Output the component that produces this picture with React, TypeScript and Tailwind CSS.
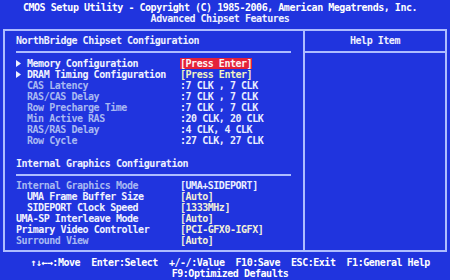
import React from 'react';

type Row = {
  label: string;
  value: string;
  arrow?: boolean;
  indent?: boolean;
  dim?: boolean;
  tone?: 'red' | 'yellow' | 'white' | 'cream';
};

const NB_ROWS: Row[] = [
  { label: 'Memory Configuration', value: '[Press Enter]', arrow: true, tone: 'red' },
  { label: 'DRAM Timing Configuration', value: '[Press Enter]', arrow: true, tone: 'yellow' },
  { label: 'CAS Latency', value: ':7 CLK , 7 CLK', indent: true, dim: true },
  { label: 'RAS/CAS Delay', value: ':7 CLK , 7 CLK', indent: true, dim: true },
  { label: 'Row Precharge Time', value: ':7 CLK , 7 CLK', indent: true, dim: true },
  { label: 'Min Active RAS', value: ':20 CLK, 20 CLK', indent: true, dim: true },
  { label: 'RAS/RAS Delay', value: ':4 CLK, 4 CLK', indent: true, dim: true },
  { label: 'Row Cycle', value: ':27 CLK, 27 CLK', indent: true, dim: true },
];

const GFX_ROWS: Row[] = [
  { label: 'Internal Graphics Mode', value: '[UMA+SIDEPORT]', dim: true, tone: 'white' },
  { label: 'UMA Frame Buffer Size', value: '[Auto]', indent: true, tone: 'cream' },
  { label: 'SIDEPORT Clock Speed', value: '[1333MHz]', indent: true, tone: 'cream' },
  { label: 'UMA-SP Interleave Mode', value: '[Auto]', tone: 'cream' },
  { label: 'Primary Video Controller', value: '[PCI-GFX0-IGFX]', tone: 'cream' },
  { label: 'Surround View', value: '[Auto]', dim: true, tone: 'cream' },
];

function Arrow() {
  return (
    <svg width="5" height="7" viewBox="0 0 5 7" className="mr-[6px]">
      <path d="M0 0 L5 3.5 L0 7 Z" fill="#f0f2ff" />
    </svg>
  );
}

function SetupRow({ row }: { row: Row }) {
  const valueClass =
    row.tone === 'red'
      ? 'bg-[#e4223a] text-[#fff4f4]'
      : row.tone === 'yellow'
        ? 'text-[#f2f2c2]'
        : row.tone === 'cream'
          ? 'text-[#f2f0d8]'
          : 'text-[#eaeeff]';
  return (
    <div className="flex h-[11px] items-center">
      <div className="flex w-[164px] items-center">
        {row.arrow ? <Arrow /> : row.indent ? <span className="w-[11px]" /> : null}
        <span className={row.dim ? 'text-[#a8b8f2]' : 'text-[#f0f2ff]'}>{row.label}</span>
      </div>
      <span className={valueClass}>{row.value}</span>
    </div>
  );
}

export default function App() {
  return (
    <div
      className="flex h-[280px] w-[450px] flex-col overflow-hidden bg-[#2034de] font-bold text-[10px] leading-[11px] tracking-[-0.47px] text-[#f4f4ff]"
      style={{ fontFamily: '"DejaVu Sans Mono", "Liberation Mono", monospace' }}
    >
      {/* Header */}
      <div className="flex flex-col items-center pt-[2px] pr-[10px] whitespace-pre">
        <div className="text-white">CMOS Setup Utility - Copyright (C) 1985-2006, American Megatrends, Inc.</div>
        <div className="text-[#eef0ff]">Advanced Chipset Features</div>
      </div>

      {/* Main box */}
      <div className="mx-[3px] mt-[5px] flex h-[223px] border-2 border-[#aebcff]">
        <div className="flex w-[300px] flex-col border-r-2 border-[#aebcff] pl-[11px] pt-[4px]">
          <div className="text-[#eef0ff]">NorthBridge Chipset Configuration</div>
          <div className="mt-[5px] mb-[5px] h-[2px] w-[275px] bg-[#aebcff]" />
          {NB_ROWS.map(r => (
            <SetupRow key={r.label} row={r} />
          ))}
          <div className="mt-[12px] text-[#eef0ff]">Internal Graphics Configuration</div>
          <div className="mt-[5px] mb-[4px] h-[2px] w-[275px] bg-[#aebcff]" />
          {GFX_ROWS.map(r => (
            <SetupRow key={r.label} row={r} />
          ))}
        </div>
        <div className="flex flex-1 flex-col pt-[4px]">
          <div className="text-center text-[#eef0ff]">Help Item</div>
          <div className="mt-[5px] h-[2px] bg-[#aebcff]" />
        </div>
      </div>

      {/* Footer */}
      <div className="flex flex-col items-center pt-[5px] pl-[10px] whitespace-pre text-white">
        <div>↑↓←→:Move  Enter:Select  +/-/:Value  F10:Save  ESC:Exit  F1:General Help</div>
        <div>F9:Optimized Defaults</div>
      </div>
    </div>
  );
}
